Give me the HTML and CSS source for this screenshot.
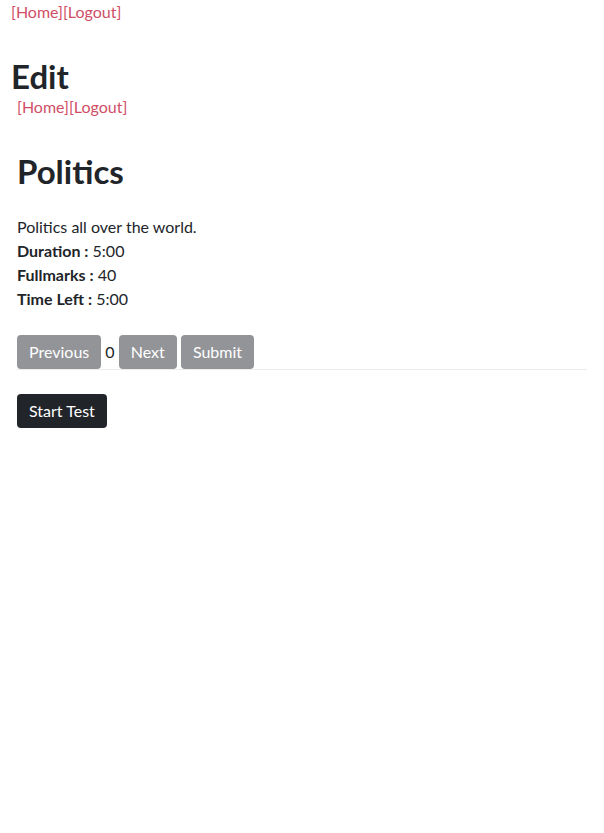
FILE: index.html
```html
<!DOCTYPE html>
<html>
<head>
<meta charset="utf-8">
<link rel="stylesheet" href="styles.css">
</head>
<body>
<div class="topnav"><a class="lnk" href="#">[Home]</a><a class="lnk" href="#">[Logout]</a></div>
<h1 class="page-title">Edit</h1>
<div class="main">
  <div class="subnav"><a class="lnk" href="#">[Home]</a><a class="lnk" href="#">[Logout]</a></div>
  <h1 class="test-title">Politics</h1>
  <div class="info">
    <div>Politics all over the world.</div>
    <div><b>Duration :</b> 5:00</div>
    <div><b>Fullmarks :</b> 40</div>
    <div><b>Time Left :</b> 5:00</div>
  </div>
  <div class="controls">
    <button class="btn btn-gray">Previous</button> <span class="counter">0</span> <button class="btn btn-gray">Next</button> <button class="btn btn-gray">Submit</button>
  </div>
  <div class="start">
    <button class="btn btn-dark">Start Test</button>
  </div>
</div>
</body>
</html>
```
FILE: styles.css
```css
* { box-sizing: border-box; }
body {
  margin: 0;
  font-family: Lato, "Open Sans", sans-serif;
  font-size: 16px;
  line-height: 24px;
  color: #212529;
  background: #fff;
}
.lnk { color: #d04f66; text-decoration: none; }
.topnav { padding-left: 11px; }
.page-title {
  margin: 34px 0 0 11px;
  font-size: 33px;
  line-height: 37px;
  font-weight: 700;
}
.main { padding: 0 17px; }
.subnav { margin-top: 0; }
.test-title {
  margin: 34px 0 0;
  font-size: 33px;
  line-height: 37px;
  font-weight: 700;
}
.info { margin-top: 25px; }
.controls {
  margin-top: 24px;
  border-bottom: 1px solid #ececec;
  font-size: 16px;
  line-height: 24px;
}
.counter { vertical-align: middle; }
.btn {
  font-family: inherit;
  font-size: 16px;
  line-height: 24px;
  padding: 5px 12px;
  border: 0;
  border-radius: 4px;
  color: #fff;
  vertical-align: middle;
}
.btn-gray { background: #929498; }
.btn-dark { background: #212529; }
.start { margin-top: 24px; }
```
